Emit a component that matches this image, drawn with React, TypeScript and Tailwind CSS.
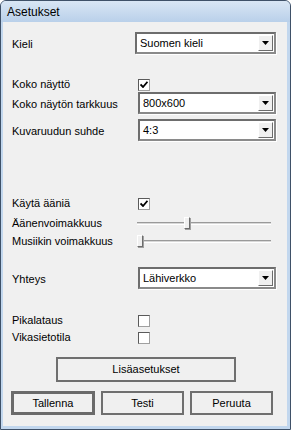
import React from "react"

const font = { fontFamily: '"Liberation Sans", Arial, sans-serif' }

function Arrow() {
  return (
    <svg width="7" height="4" viewBox="0 0 7 4">
      <path d="M0 0h7L3.5 4z" fill="#000" />
    </svg>
  )
}

function Select({ value, w }: { value: string; w: string }) {
  return (
    <div className={`${w} h-[22px] flex items-center bg-white border-2 border-t-[#6d6d6d] border-l-[#6d6d6d] border-r-[#8a8a8a] border-b-[#8a8a8a] shadow-[1px_1px_0_#ffffff]`}>
      <span className="flex-1 pl-[3px] text-[11px] text-black leading-none">{value}</span>
      <div className="mr-[1px] w-[15px] h-[16px] flex items-center justify-center bg-[#f0f0f0] border border-t-[#ffffff] border-l-[#ffffff] border-r-[#6d6d6d] border-b-[#6d6d6d]">
        <Arrow />
      </div>
    </div>
  )
}

function Check({ on }: { on?: boolean }) {
  return (
    <div className="w-[12px] h-[12px] bg-white border border-t-[#5a5a5a] border-l-[#5a5a5a] border-r-[#a0a0a0] border-b-[#a0a0a0] flex items-center justify-center">
      {on && (
        <svg width="8" height="7" viewBox="0 0 8 7">
          <path d="M0.5 3.5L3 6L7.5 0.8" stroke="#000" strokeWidth="1.8" fill="none" />
        </svg>
      )}
    </div>
  )
}

function Slider({ pos }: { pos: number }) {
  return (
    <div className="relative w-[134px] h-[12px] flex items-center">
      <div className="w-full h-[3px] border-t border-t-[#9a9a9a] border-b border-b-[#ffffff] bg-[#d8d8d8]" />
      <div
        className="absolute top-0 w-[6px] h-[12px] bg-[#f0f0f0] border border-t-[#ffffff] border-l-[#ffffff] border-r-[#6d6d6d] border-b-[#6d6d6d] shadow-[1px_1px_0_#a0a0a0]"
        style={{ left: pos }}
      />
    </div>
  )
}

function Label({ text, w = "w-[135px]", drop }: { text: string; w?: string; drop?: boolean }) {
  return (
    <span className={`${w} shrink-0 pl-[9px] text-[11px] text-black leading-none ${drop ? "pt-[3px]" : ""}`}>{text}</span>
  )
}

function Btn({ text, w, def }: { text: string; w: string; def?: boolean }) {
  return (
    <button
      className={`${w} h-[24px] bg-[#f0f0f0] text-[11px] text-black leading-none ${
        def ? "border-[3px] border-[#6a6a6a]" : "border-2 border-[#6f6f6f]"
      }`}
    >
      {text}
    </button>
  )
}

export default function App() {
  return (
    <div style={font} className="w-[291px] h-[430px] flex flex-col bg-[#c2d7ee] border border-[#3f5168] rounded-t-[6px] overflow-hidden">
      {/* Title bar */}
      <div className="h-[21px] flex items-center pl-[6px] bg-gradient-to-b from-[#d9e6f4] to-[#b9d0ea]">
        <span className="text-[12px] text-black">Asetukset</span>
      </div>

      {/* Client area */}
      <div className="flex-1 ml-[2px] mr-[3px] mb-[3px] bg-[#f0f0f0] flex flex-col">
        <div className="mt-[10px] h-[22px] flex items-center">
          <Label text="Kieli" w="w-[132px]" drop />
          <Select value="Suomen kieli" w="w-[141px]" />
        </div>

        <div className="mt-[24px] h-[13px] flex items-center">
          <Label text="Koko näyttö" />
          <Check on />
        </div>

        <div className="mt-[1px] h-[22px] flex items-center">
          <Label text="Koko näytön tarkkuus" drop />
          <Select value="800x600" w="w-[138px]" />
        </div>

        <div className="mt-[5px] h-[22px] flex items-center">
          <Label text="Kuvaruudun suhde" drop />
          <Select value="4:3" w="w-[138px]" />
        </div>

        <div className="mt-[56px] h-[13px] flex items-center">
          <Label text="Käytä ääniä" />
          <Check on />
        </div>

        <div className="mt-[7px] h-[12px] flex items-center">
          <Label text="Äänenvoimakkuus" w="w-[134px]" />
          <Slider pos={47} />
        </div>

        <div className="mt-[6px] h-[12px] flex items-center">
          <Label text="Musiikin voimakkuus" w="w-[134px]" />
          <Slider pos={0} />
        </div>

        <div className="mt-[20px] h-[22px] flex items-center">
          <Label text="Yhteys" drop />
          <Select value="Lähiverkko" w="w-[138px]" />
        </div>

        <div className="mt-[25px] h-[13px] flex items-center">
          <Label text="Pikalataus" />
          <Check />
        </div>

        <div className="mt-[4px] h-[13px] flex items-center">
          <Label text="Vikasietotila" />
          <Check />
        </div>

        <div className="mt-[13px] flex pl-[53px]">
          <button className="w-[180px] h-[25px] bg-[#f0f0f0] border-2 border-[#6f6f6f] text-[11px] text-black leading-none">
            Lisäasetukset
          </button>
        </div>

        <div className="mt-[9px] flex pl-[8px] gap-[6px]">
          <Btn text="Tallenna" w="w-[84px]" def />
          <Btn text="Testi" w="w-[83px]" />
          <Btn text="Peruuta" w="w-[83px]" />
        </div>
      </div>
    </div>
  )
}
